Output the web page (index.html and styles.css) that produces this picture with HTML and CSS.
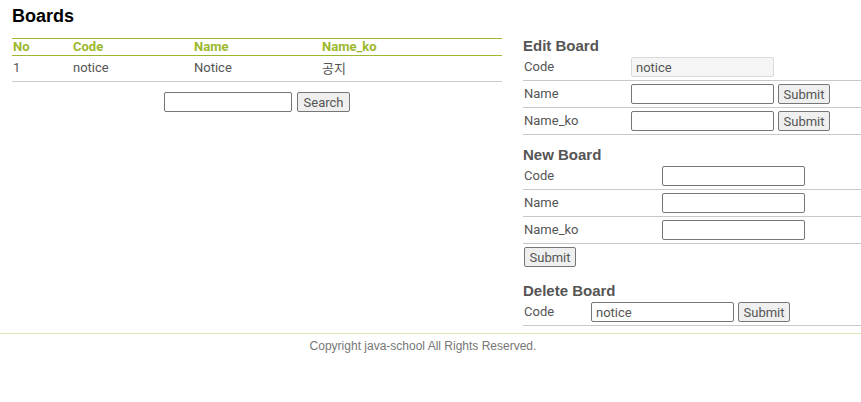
FILE: index.html
```html
<!DOCTYPE html>
<html>
<head>
<meta charset="utf-8">
<title>Boards</title>
<link rel="stylesheet" href="styles.css">
</head>
<body>
<div class="page">
  <div class="main">
    <h1 class="title">Boards</h1>
    <table class="list">
      <thead>
        <tr><th class="c-no">No</th><th class="c-code">Code</th><th class="c-name">Name</th><th class="c-ko">Name_ko</th></tr>
      </thead>
      <tbody>
        <tr><td>1</td><td>notice</td><td>Notice</td><td>공지</td></tr>
      </tbody>
    </table>
    <form class="search">
      <input type="text" class="field search-field">
      <button type="button" class="btn">Search</button>
    </form>
  </div>
  <div class="side">
    <h2 class="sub sub-edit">Edit Board</h2>
    <div class="rows rows-edit">
      <div class="row"><span class="label">Code</span><input class="field readonly" value="notice" readonly></div>
      <div class="row"><span class="label">Name</span><input class="field"><button type="button" class="btn">Submit</button></div>
      <div class="row"><span class="label">Name_ko</span><input class="field"><button type="button" class="btn">Submit</button></div>
    </div>
    <h2 class="sub sub-new">New Board</h2>
    <div class="rows rows-new">
      <div class="row"><span class="label">Code</span><input class="field"></div>
      <div class="row"><span class="label">Name</span><input class="field"></div>
      <div class="row"><span class="label">Name_ko</span><input class="field"></div>
    </div>
    <div class="submit-line"><button type="button" class="btn">Submit</button></div>
    <h2 class="sub sub-del">Delete Board</h2>
    <div class="rows rows-del">
      <div class="row"><span class="label">Code</span><input class="field" value="notice"><button type="button" class="btn">Submit</button></div>
    </div>
  </div>
</div>
<footer class="footer">Copyright java-school All Rights Reserved.</footer>
</body>
</html>
```

FILE: styles.css
```css
html, body {
  margin: 0;
  padding: 0;
  background: #fff;
}
body {
  font-family: Roboto, "Liberation Sans", Arial, sans-serif;
  font-size: 13px;
  color: #555;
}
.page {
  display: flex;
  padding-left: 12px;
  gap: 21px;
}
.main {
  width: 490px;
  flex: none;
}
.side {
  flex: 1;
}
.title {
  font-family: "Liberation Sans", Arial, sans-serif;
  font-weight: bold;
  font-size: 18px;
  line-height: 22px;
  color: #000;
  margin: 5px 0 11px;
}
.list {
  width: 100%;
  border-collapse: collapse;
  border-top: 1px solid #9cb82c;
}
.list th {
  color: #9cb82c;
  font-weight: bold;
  text-align: left;
  height: 16px;
  line-height: 16px;
  padding: 0 0 0 1px;
  border-bottom: 1px solid #9cb82c;
}
.list td {
  height: 23px;
  padding: 0 0 2px 1px;
  border-bottom: 1px solid #ccc;
  font-family: Roboto, "Noto Sans CJK KR", sans-serif;
}
.c-no { width: 59px; }
.c-code { width: 120px; }
.c-name { width: 127px; }
.search {
  display: flex;
  justify-content: center;
  gap: 5px;
  margin-top: 10px;
}
.field {
  box-sizing: border-box;
  width: 143px;
  height: 20px;
  border: 1px solid #767676;
  border-radius: 2px;
  padding: 1px 4px;
  font-family: Roboto, Arial, sans-serif;
  font-size: 13px;
  color: #555;
  background: #fff;
  margin: 0;
}
.search-field { width: 128px; }
.readonly {
  background: #f5f5f5;
  border-color: #d9d9d9;
}
.btn {
  box-sizing: border-box;
  height: 20px;
  width: 52px;
  border: 1px solid #767676;
  border-radius: 2px;
  background: #efefef;
  color: #555;
  font-family: Roboto, Arial, sans-serif;
  font-size: 13px;
  padding: 0;
  margin: 0;
}
.search .btn { width: 53px; }
.sub {
  font-family: "Liberation Sans", Arial, sans-serif;
  font-weight: bold;
  font-size: 15px;
  line-height: 17px;
  padding-top: 1px;
  color: #555;
  margin: 0;
}
.sub-edit { margin-top: 36px; }
.sub-new { margin-top: 10px; }
.sub-del { margin-top: 14px; }
.row {
  display: flex;
  align-items: center;
  gap: 4px;
  height: 26px;
  border-bottom: 1px solid #c8c8c8;
  padding-left: 1px;
}
.label { flex: none; margin-right: -4px; padding-bottom: 2px; }
.rows-edit .label { width: 107px; }
.rows-new .label { width: 138px; }
.rows-del .label { width: 67px; }
.submit-line {
  padding-top: 3px;
  padding-left: 1px;
  line-height: 0;
}
.footer {
  margin-top: 7px;
  border-top: 1px solid #dde6b8;
  text-align: center;
  font-family: "Liberation Sans", Arial, sans-serif;
  font-size: 12px;
  line-height: 24px;
  color: #777;
  padding-right: 15px;
}
```
